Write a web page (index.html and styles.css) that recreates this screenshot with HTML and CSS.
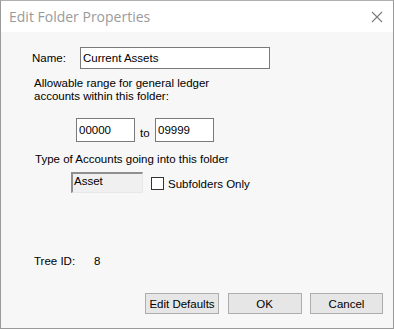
FILE: index.html
```html
<!DOCTYPE html>
<html lang="en">
<head>
  <meta charset="UTF-8">
  <title>Edit Folder Properties</title>
  <link rel="stylesheet" href="styles.css">
</head>
<body>
  <div class="dialog">
    <div class="titlebar">
      <span class="title">Edit Folder Properties</span>
      <svg class="close" width="12" height="12" viewBox="0 0 12 12">
        <path d="M1 1 L11 11 M11 1 L1 11" stroke="#7a7a7a" stroke-width="1.1" fill="none"/>
      </svg>
    </div>
    <div class="content">
      <div class="name-row">
        <label class="name-label">Name:</label>
        <input type="text" class="field name-field" value="Current Assets">
      </div>
      <p class="range-text">Allowable range for general ledger<br>accounts within this folder:</p>
      <div class="range-row">
        <input type="text" class="field range-field" value="00000">
        <span class="to">to</span>
        <input type="text" class="field range-field" value="09999">
      </div>
      <p class="type-text">Type of Accounts going into this folder</p>
      <div class="type-row">
        <div class="type-box">Asset</div>
        <span class="checkbox"></span>
        <span class="check-label">Subfolders Only</span>
      </div>
      <div class="tree-row">
        <span class="tree-label">Tree ID:</span>
        <span>8</span>
      </div>
      <div class="buttons">
        <button>Edit Defaults</button>
        <button>OK</button>
        <button class="cancel">Cancel</button>
      </div>
    </div>
  </div>
</body>
</html>
```

FILE: styles.css
```css
body {
  margin: 0;
  background: #5a5a5a;
  font-family: 'Liberation Sans', Arial, sans-serif;
  font-size: 11.5px;
  color: #000;
}

.dialog {
  width: 392px;
  height: 327px;
  border: 1px solid #9a9a9a;
  border-top-color: #b0b0b0;
  background: #f7f7f7;
  box-sizing: content-box;
}

.titlebar {
  height: 31px;
  background: #ffffff;
  display: flex;
  align-items: center;
  justify-content: space-between;
  padding: 0 10px 0 8px;
  box-sizing: border-box;
}

.title {
  font-family: 'Open Sans', 'Noto Sans', sans-serif;
  font-size: 14px;
  color: #9a9a9a;
}

.close {
  margin-top: 1px;
}

.field {
  font-family: 'Liberation Sans', Arial, sans-serif;
  font-size: 11.5px;
  border: 1px solid #7a7a7a;
  background: #fff;
  padding: 0 2px;
  margin: 0;
  box-sizing: border-box;
  outline: none;
}

.name-row {
  display: flex;
  align-items: center;
  padding: 15px 0 0 31px;
}

.name-label {
  width: 48px;
}

.name-field {
  width: 190px;
  height: 22px;
}

.range-text {
  margin: 8px 0 0 33px;
  line-height: 13px;
}

.range-row {
  display: flex;
  align-items: center;
  padding: 15px 0 0 75px;
}

.range-field {
  width: 59px;
  height: 24px;
}

.to {
  width: 20px;
  padding: 6px 0 0 5px;
  box-sizing: border-box;
}

.type-text {
  margin: 11px 0 0 34px;
  line-height: 13px;
}

.type-row {
  display: flex;
  align-items: center;
  padding: 6px 0 0 70px;
}

.type-box {
  width: 72px;
  height: 21px;
  box-sizing: border-box;
  border: 1px solid #e8e8e8;
  border-top: 2px solid #8f8f8f;
  border-left: 2px solid #8f8f8f;
  background: #f0f0f0;
  padding: 1px 1px;
}

.checkbox {
  width: 13px;
  height: 13px;
  border: 1px solid #333;
  background: #fff;
  box-sizing: border-box;
  margin: 2px 4px 0 8px;
}

.check-label {
  margin-top: 2px;
}

.tree-row {
  display: flex;
  padding: 62px 0 0 33px;
  line-height: 13px;
}

.tree-label {
  width: 60px;
}

.buttons {
  display: flex;
  justify-content: flex-end;
  gap: 8.5px;
  padding: 25px 10px 0 0;
}

button {
  font-family: 'Liberation Sans', Arial, sans-serif;
  font-size: 11.5px;
  width: 74px;
  height: 21px;
  padding: 0;
  background: #e6e6e6;
  border: 1px solid #adadad;
  color: #000;
}

.cancel {
  width: 73px;
}
```
